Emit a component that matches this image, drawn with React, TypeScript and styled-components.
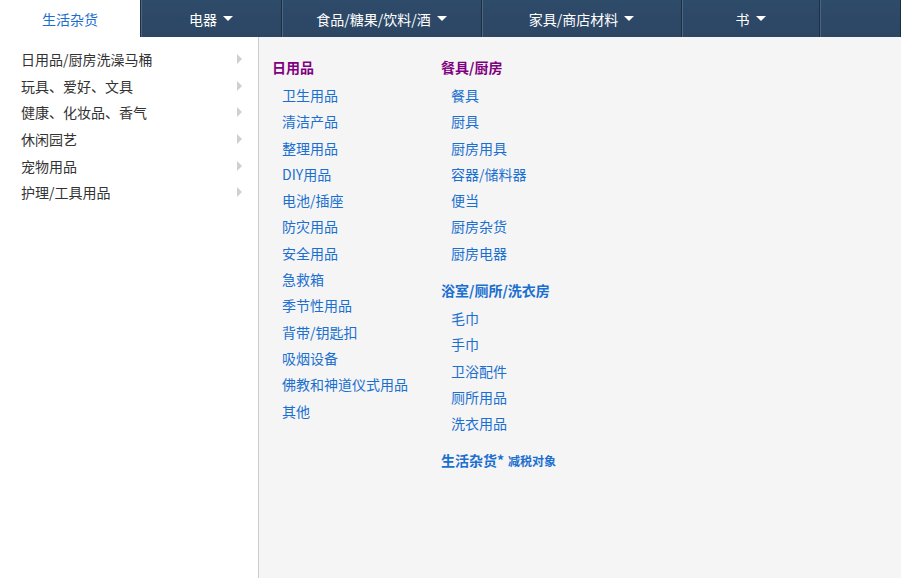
import React from "react";
import styled, { createGlobalStyle } from "styled-components";

const Global = createGlobalStyle`
  html, body { margin: 0; padding: 0; background: #fff; }
  body { font-family: "Microsoft YaHei", "Noto Sans CJK SC", sans-serif; font-size: 14px; }
`;

const Page = styled.div`
  width: 901px; height: 578px; display: flex; flex-direction: column; overflow: hidden;
`;
const Nav = styled.div`
  display: flex; height: 37px; background: linear-gradient(#2f4b6a, #2c4664);
`;
const Tab = styled.div<{ $w: number; $active?: boolean }>`
  width: ${p => p.$w}px; flex-shrink: 0; box-sizing: border-box; display: flex; align-items: center; justify-content: center;
  gap: 6px; font-size: 14px;
  color: ${p => (p.$active ? "#1a6fd0" : "#fff")};
  background: ${p => (p.$active ? "#fff" : "transparent")};
  border-right: 1px solid #1b2f45;
  box-shadow: ${p => (p.$active ? "none" : "inset 1px 0 0 #4d6580")};
`;
const Caret = styled.span`
  width: 0; height: 0; border-left: 5px solid transparent; border-right: 5px solid transparent;
  border-top: 5px solid #fff;
`;
const Body = styled.div`flex: 1; display: flex;`;
const Side = styled.div`
  width: 259px; border-right: 1px solid #cccccc; background: #fff; padding-top: 9px; box-sizing: border-box;
`;
const SideItem = styled.div`
  height: 26.6px; display: flex; align-items: center; justify-content: space-between;
  padding: 0 16px 0 21px; color: #333; font-size: 14px;
`;
const Chevron = styled.span`
  width: 0; height: 0; border-top: 5px solid transparent; border-bottom: 5px solid transparent;
  border-left: 5px solid #cfcfcf;
`;
const Main = styled.div`flex: 1; background: #f5f5f5; display: flex; padding: 19px 0 0 13px;`;
const Col = styled.div<{ $w: number }>`width: ${p => p.$w}px; display: flex; flex-direction: column;`;
const Head = styled.div<{ $color: string; $mt?: number }>`
  font-weight: bold; color: ${p => p.$color}; font-size: 14px; line-height: 22px;
  margin-top: ${p => p.$mt ?? 0}px; margin-bottom: 4px;
`;
const Item = styled.div`
  color: #1a6fd0; font-size: 14px; line-height: 26.3px; padding-left: 10px;
`;
const Small = styled.span`font-size: 12px; margin-left: 4px;`;

const sideItems = ["日用品/厨房洗澡马桶", "玩具、爱好、文具", "健康、化妆品、香气", "休闲园艺", "宠物用品", "护理/工具用品"];
const col1 = ["卫生用品", "清洁产品", "整理用品", "DIY用品", "电池/插座", "防灾用品", "安全用品", "急救箱", "季节性用品", "背带/钥匙扣", "吸烟设备", "佛教和神道仪式用品", "其他"];
const col2a = ["餐具", "厨具", "厨房用具", "容器/储料器", "便当", "厨房杂货", "厨房电器"];
const col2b = ["毛巾", "手巾", "卫浴配件", "厕所用品", "洗衣用品"];

export default function App() {
  return (
    <Page>
      <Global />
      <Nav>
        <Tab $w={141} $active>生活杂货</Tab>
        <Tab $w={141}>电器<Caret /></Tab>
        <Tab $w={200}>食品/糖果/饮料/酒<Caret /></Tab>
        <Tab $w={200}>家具/商店材料<Caret /></Tab>
        <Tab $w={138}>书<Caret /></Tab>
        <Tab $w={81} />
      </Nav>
      <Body>
        <Side>
          {sideItems.map(s => (
            <SideItem key={s}>{s}<Chevron /></SideItem>
          ))}
        </Side>
        <Main>
          <Col $w={169}>
            <Head $color="#800080">日用品</Head>
            {col1.map(s => <Item key={s}>{s}</Item>)}
          </Col>
          <Col $w={200}>
            <Head $color="#800080">餐具/厨房</Head>
            {col2a.map(s => <Item key={s}>{s}</Item>)}
            <Head $color="#1a6fd0" $mt={13}>浴室/厕所/洗衣房</Head>
            {col2b.map(s => <Item key={s}>{s}</Item>)}
            <Head $color="#1a6fd0" $mt={12}>生活杂货*<Small>减税对象</Small></Head>
          </Col>
        </Main>
      </Body>
    </Page>
  );
}
